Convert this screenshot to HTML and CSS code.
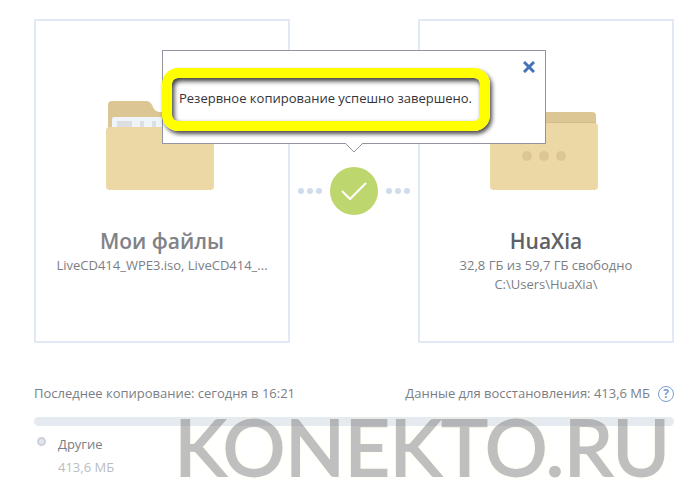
FILE: index.html
```
<!DOCTYPE html>
<html lang="ru">
<head>
    <meta charset="UTF-8">
    <meta name="viewport" content="width=device-width, initial-scale=1.0">
    <title>Резервное копирование</title>
    <link rel="stylesheet" href="styles.css">
</head>
<body>
    <main class="backup">
        <div class="transfer">
            <section class="card">
                <svg class="folder" viewBox="0 0 114 92" aria-hidden="true">
                    <path d="M3 40V6q0-4 4-4h34q4 0 6 4l2 4q2 3 6 3h48q4 0 4 4v23z" fill="#dcc693"/>
                    <rect x="7" y="18" width="96" height="20" rx="2" fill="#eff3fa"/>
                    <path d="M12 22h15v8H12zM35 22h4v8h-4zM47 22h4v8h-4z" fill="#dcdee1"/>
                    <rect x="1" y="28" width="108" height="63" rx="4" fill="#ecd8a5"/>
                </svg>
                <h2 class="card-title">Мои файлы</h2>
                <p class="card-text">LiveCD414_WPE3.iso, LiveCD414_...</p>
            </section>

            <div class="link">
                <span class="dots"><i></i><i></i><i></i></span>
                <svg class="check" viewBox="0 0 48 48" aria-hidden="true">
                    <circle cx="24" cy="24" r="24" fill="#bdd66d"/>
                    <path d="M12 24l8 8 16-16" fill="none" stroke="#fff" stroke-width="2"/>
                </svg>
                <span class="dots"><i></i><i></i><i></i></span>

                <div class="popup" role="status">
                    <div class="highlight">Резервное копирование успешно завершено.</div>
                    <button class="close" type="button" aria-label="Закрыть">
                        <svg viewBox="0 0 12 12"><path d="M1 1l10 10M11 1L1 11" stroke="#4474b8" stroke-width="3"/></svg>
                    </button>
                    <svg class="arrow" viewBox="0 0 18 10" aria-hidden="true">
                        <path d="M0 0h18v1l-9 8-9-8z" fill="#fff"/>
                        <path d="M0 0l9 9 9-9" fill="none" stroke="#9293a3"/>
                    </svg>
                </div>
            </div>

            <section class="card">
                <svg class="folder" viewBox="0 0 114 92" aria-hidden="true">
                    <path d="M3 40V17q0-4 4-4h96q4 0 4 4v23z" fill="#dcc693"/>
                    <path d="M5 23h102v2H5z" fill="#d2bc89"/>
                    <rect x="1" y="24" width="108" height="67" rx="4" fill="#ecd8a5"/>
                    <g fill="#dcc693">
                        <circle cx="38" cy="57" r="5"/>
                        <circle cx="55" cy="57" r="5"/>
                        <circle cx="72" cy="57" r="5"/>
                    </g>
                </svg>
                <h2 class="card-title card-title-dark">HuaXia</h2>
                <p class="card-text">32,8 ГБ из 59,7 ГБ свободно</p>
                <p class="card-text">C:\Users\HuaXia\</p>
            </section>
        </div>

        <div class="summary">
            <span>Последнее копирование: сегодня в 16:21</span>
            <span class="restore">
                Данные для восстановления: 413,6 МБ
                <button class="help" type="button" aria-label="Справка">?</button>
            </span>
        </div>
        <div class="bar"></div>
        <div class="legend">
            <span class="marker"></span>
            <div>
                <div>Другие</div>
                <div class="size">413,6 МБ</div>
            </div>
        </div>
        <div class="watermark">KONEKTO.RU</div>
    </main>
</body>
</html>
```
FILE: styles.css
```
* {
    box-sizing: border-box;
}

body {
    margin: 0;
    background: #fff;
    color: #7b7e85;
    font-family: "Open Sans", "Noto Sans", sans-serif;
    font-size: 13px;
    line-height: 19px;
}

button {
    padding: 0;
    cursor: pointer;
}

.backup {
    position: relative;
    padding: 19px 24px 16px 34px;
}

.transfer {
    display: grid;
    grid-template-columns: 2fr 1fr 2fr;
}

.card {
    min-width: 0;
    min-height: 324px;
    padding: 78px 14px 0;
    border: 2px solid #e2e8f4;
    text-align: center;
}

.folder {
    display: block;
    width: 114px;
    height: 92px;
    margin: 0 auto 36px;
}

.card-title {
    margin: 0;
    color: #808287;
    font-size: 21px;
    font-weight: 600;
    line-height: 29px;
}

.card-title-dark {
    color: #606165;
}

.card-text {
    margin: 0;
    white-space: nowrap;
}

.link {
    position: relative;
    display: flex;
    align-items: center;
    justify-content: center;
    gap: 8px;
    height: 48px;
    margin-top: 148px;
}

.dots {
    display: flex;
    gap: 3px;
}

.dots i {
    width: 6px;
    height: 6px;
    border-radius: 50%;
    background: #d0dbec;
}

.check {
    width: 48px;
    height: 48px;
}

.popup {
    position: absolute;
    bottom: 71px;
    left: 50%;
    width: 384px;
    margin-left: -192px;
    padding: 17px 55px 12px 0;
    border: 1px solid #9293a3;
    background: #fff;
    color: #33343a;
}

.highlight {
    margin-left: -1px;
    padding: 11px 7px 13px;
    border: 10px solid #ff0;
    border-radius: 16px;
    box-shadow: 2px 3px 4px rgba(0, 0, 0, 0.7), inset 2px 3px 5px rgba(0, 0, 0, 0.8);
    white-space: nowrap;
}

.close {
    position: absolute;
    top: 10px;
    right: 10px;
    width: 12px;
    height: 12px;
    border: 0;
    background: none;
}

.close svg {
    display: block;
}

.arrow {
    position: absolute;
    top: 100%;
    left: 50%;
    width: 18px;
    height: 10px;
    margin-left: -9px;
}

.summary {
    display: flex;
    justify-content: space-between;
    margin-top: 41px;
}

.restore {
    display: flex;
    align-items: center;
    gap: 8px;
}

.help {
    width: 16px;
    height: 16px;
    border: 1px solid #7d9dce;
    border-radius: 50%;
    background: #fff;
    color: #7d9dce;
    font: 700 12px/14px "Open Sans", sans-serif;
}

.bar {
    height: 9px;
    margin-top: 14px;
    border-radius: 5px;
    background: #e5eaf0;
}

.legend {
    display: flex;
    gap: 12px;
    margin-top: 7px;
    padding-left: 3px;
    line-height: 23px;
}

.marker {
    width: 9px;
    height: 9px;
    margin-top: 4px;
    border: 2px solid #cdd1d8;
    border-radius: 50%;
    background: #e2e7ef;
}

.size {
    color: #b9bdc3;
}

.watermark {
    position: absolute;
    right: 28px;
    bottom: 20px;
    color: #808080;
    font-family: Lato, sans-serif;
    font-size: 78px;
    line-height: 58px;
    opacity: 0.5;
    -webkit-text-stroke: 2px #808080;
    text-shadow: 0 0 6px rgba(255, 255, 200, 0.6);
    pointer-events: none;
}
```
